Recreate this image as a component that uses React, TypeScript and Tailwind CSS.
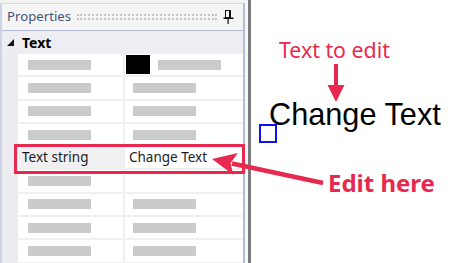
import React from "react";

type Row = {
  label?: string;
  value?: string;
  swatch?: boolean;
  valueBar?: boolean;
};

const rows: Row[] = [
  { swatch: true, valueBar: true },
  { valueBar: true },
  { valueBar: true },
  { valueBar: true },
  { label: "Text string", value: "Change Text" },
  { valueBar: false },
  { valueBar: true },
  { valueBar: true },
  { valueBar: true },
];

const ui = { fontFamily: '"Noto Sans", "Open Sans", sans-serif' };

function PinIcon() {
  return (
    <svg width="11" height="14" viewBox="0 0 11 14" className="shrink-0">
      <rect x="2.5" y="0.5" width="5" height="7" fill="none" stroke="#111" strokeWidth="1" />
      <rect x="6" y="0.5" width="2" height="7" fill="#111" />
      <rect x="0.5" y="7.5" width="10" height="1.5" fill="#111" />
      <rect x="4.5" y="9" width="1.2" height="5" fill="#111" />
    </svg>
  );
}

function PropertyRow({ row }: { row: Row }) {
  const isText = !!row.label;
  return (
    <div className="flex h-[23.3px] shrink-0">
      <div className="w-[16px] bg-[#ececf0]" />
      <div
        className={`flex w-[107px] items-center border-b-2 border-r-2 border-[#f0f0f0] pl-[4px] ${
          isText ? "bg-[#f0f0f3]" : "bg-white"
        }`}
      >
        {isText ? (
          <span className="text-[13.5px] leading-none text-[#1b1b1f]">{row.label}</span>
        ) : (
          <div className="ml-[6px] h-[10px] w-[63px] bg-[#cbcbcb]" />
        )}
      </div>
      <div className="flex flex-1 items-center border-b-2 border-[#f0f0f0] bg-white pl-[4px]">
        {isText ? (
          <span className="text-[13.5px] leading-none text-[#1b1b1f]">{row.value}</span>
        ) : row.swatch ? (
          <>
            <div className="-ml-[3px] h-[19px] w-[24px] bg-black" />
            <div className="ml-[8px] h-[10px] w-[63px] bg-[#cbcbcb]" />
          </>
        ) : row.valueBar ? (
          <div className="ml-[4px] h-[10px] w-[63px] bg-[#cbcbcb]" />
        ) : null}
      </div>
    </div>
  );
}

export default function App() {
  return (
    <div className="relative flex h-[263px] w-[450px] overflow-hidden bg-white" style={ui}>
      <div className="flex w-[245px] shrink-0 flex-col bg-[#f5f5f5]">
        <div className="h-[3px] shrink-0 bg-[#f3f3f3]" />
        <div className="flex flex-1 flex-col overflow-hidden border-l-2 border-r-2 border-t border-[#b4bcd7] border-t-[#d9d9d9] border-l-[#cdd3e4]">
          <div className="flex h-[27px] shrink-0 items-center gap-[6px] border-b border-[#b4bcd7] bg-[#f5f5f5] pl-[5px] pr-[9px]">
            <span className="text-[13.2px] leading-none text-[#45537c]">Properties</span>
            <div className="h-[6px] flex-1 border-y-2 border-dotted border-[#c4c4c4]" />
            <PinIcon />
          </div>
          <div className="flex h-[23px] shrink-0 items-center bg-[#eeeef2] pl-[5px]">
            <svg width="8" height="8" viewBox="0 0 8 8" className="shrink-0">
              <polygon points="7,0 7,7 0,7" fill="#111" />
            </svg>
            <span className="ml-[7px] text-[14px] font-bold leading-none text-black">Text</span>
          </div>
          {rows.map((row, i) => (
            <PropertyRow key={i} row={row} />
          ))}
        </div>
      </div>
      <div className="w-[3px] shrink-0 bg-[#f7f7f7]" />
      <div className="w-[3px] shrink-0 bg-[#7b7b7b]" />
      <div className="relative flex-1 bg-white">
        <span className="absolute left-[28px] top-[39px] whitespace-nowrap text-[21.3px] leading-none text-[#e8294f]">
          Text to edit
        </span>
        <span
          className="absolute left-[18px] top-[100px] whitespace-nowrap text-[30.7px] leading-none text-black"
          style={{ fontFamily: '"Liberation Sans", Arial, sans-serif' }}
        >
          Change Text
        </span>
        <div className="absolute left-[8px] top-[124px] h-[19px] w-[18px] border-2 border-[#1010f0]" />
        <span className="absolute left-[77px] top-[171px] whitespace-nowrap text-[24px] font-bold leading-none text-[#e8294f]">
          Edit here
        </span>
      </div>
      <svg className="pointer-events-none absolute inset-0" width="450" height="263" viewBox="0 0 450 263">
        <rect x="15.5" y="145.5" width="228" height="27" fill="none" stroke="#e8294f" strokeWidth="3" />
        <line x1="232" y1="163.5" x2="323" y2="183" stroke="#e8294f" strokeWidth="4.5" />
        <polygon points="212,159 237.8,153.1 230.6,162.9 233.2,174.7" fill="#e8294f" />
        <line x1="336" y1="64" x2="336" y2="88" stroke="#e8294f" strokeWidth="4" />
        <polygon points="327.5,85 344.5,85 336,102" fill="#e8294f" />
      </svg>
    </div>
  );
}
